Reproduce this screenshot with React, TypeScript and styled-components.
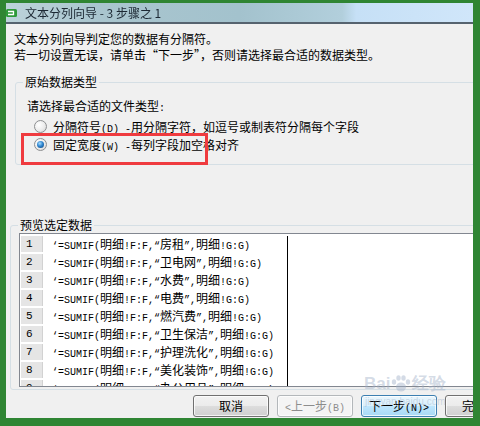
import React from "react";
import styled, { createGlobalStyle } from "styled-components";

const GlobalStyle = createGlobalStyle`
  * { box-sizing: border-box; }
  html, body { margin: 0; padding: 0; background: #2f8533; }
  body {
    font-family: "Noto Sans CJK SC", "Liberation Sans", sans-serif;
    font-size: 12px;
    color: #000;
  }
`;

const Frame = styled.div`
  width: 480px;
  height: 426px;
  padding: 3px 7px 8px 6px;
  background: #2f8533;
  overflow: hidden;
`;

const Window = styled.div`
  width: 467px;
  height: 415px;
  display: flex;
  flex-direction: column;
  background: #f0f0f0;
  overflow: hidden;
`;

const TitleBar = styled.div`
  flex: none;
  height: 21px;
  display: flex;
  align-items: center;
  gap: 8px;
  background: linear-gradient(
    90deg,
    #bcd3da 0%,
    #a9c5ce 20%,
    #a3c2cd 50%,
    #b2cfdc 72%,
    #c6e0f6 75%,
    #d0e6fa 100%
  );
  border-bottom: 2px solid #56636f;
`;

const TitleText = styled.span`
  color: #1c2833;
  font-size: 12px;
  filter: blur(0.6px);
  white-space: nowrap;
`;

const Body = styled.div`
  position: relative;
  flex: 1;
  display: flex;
  flex-direction: column;
  overflow: hidden;
`;

const Intro = styled.div`
  padding: 7px 0 0 8px;
  line-height: 16px;
  white-space: nowrap;
`;

const Group = styled.fieldset<{ $top: number; $left: number }>`
  flex: none;
  margin: ${(p) => p.$top}px 0 0 ${(p) => p.$left}px;
  padding: 0;
  width: 480px;
  min-width: 0;
  border: 1px solid #d5dfe5;
  border-radius: 3px;
`;

const Legend = styled.legend`
  margin-left: 7px;
  padding: 0 2px;
  line-height: 14px;
  font-size: 12px;
`;

const TypeOptions = styled.div`
  display: flex;
  flex-direction: column;
  padding-bottom: 11px;
`;

const Prompt = styled.div`
  height: 16px;
  margin: 9px 0 3px 11px;
  line-height: 16px;
`;

const RadioRow = styled.div`
  display: flex;
  align-items: center;
  gap: 6px;
  height: 18px;
  padding-left: 18px;
  white-space: nowrap;
`;

const Radio = styled.span<{ $checked?: boolean }>`
  flex: none;
  width: 13px;
  height: 13px;
  border-radius: 50%;
  border: 1px solid #8d8f91;
  background: radial-gradient(circle at 35% 35%, #ffffff 0%, #ececec 55%, #cdcdcd 100%);
  display: flex;
  align-items: center;
  justify-content: center;

  &::after {
    content: "";
    display: ${(p) => (p.$checked ? "block" : "none")};
    width: 7px;
    height: 7px;
    border-radius: 50%;
    background: radial-gradient(circle at 40% 35%, #a8ddff 0%, #2f86d0 45%, #0b3b72 100%);
  }
`;

const ListBox = styled.div`
  margin: 1px 0 2px 8px;
  width: 470px;
  height: 154px;
  padding-top: 2px;
  border: 1px solid #828790;
  background: #fff;
  overflow: hidden;
`;

const Row = styled.div`
  display: flex;
  height: 18px;
`;

const NumCell = styled.div`
  width: 22px;
  height: 16px;
  margin-left: 1px;
  padding-left: 5px;
  background: #e5e5e5;
  border-right: 1px solid #d2d2d2;
  font-family: "Liberation Mono", monospace;
  font-size: 11px;
  line-height: 16px;
`;

const TextCell = styled.div`
  width: 245px;
  height: 18px;
  padding-left: 9px;
  border-right: 1px solid #000;
  line-height: 16px;
  white-space: nowrap;
  overflow: hidden;
`;

const Latin = styled.span`
  font-family: "Liberation Mono", monospace;
  font-size: 10px;
  line-height: 1;
`;

const ButtonRow = styled.div`
  flex: none;
  display: flex;
  gap: 8px;
  margin-top: 5px;
  padding-left: 187px;
`;

type Variant = "normal" | "primary" | "disabled";

const Button = styled.button<{ $variant?: Variant }>`
  flex: none;
  width: 76px;
  height: 22px;
  padding: 0;
  border-radius: 3px;
  font-family: "Noto Sans CJK SC", sans-serif;
  font-size: 12px;
  line-height: 16px;
  white-space: nowrap;
  border: 1px solid
    ${(p) =>
      p.$variant === "primary" ? "#3c7fb1" : p.$variant === "disabled" ? "#b3b7ba" : "#707070"};
  color: ${(p) => (p.$variant === "disabled" ? "#8d8d8d" : "#000")};
  background: ${(p) =>
    p.$variant === "primary"
      ? "linear-gradient(#eaf6fd 0%, #d9f0fc 50%, #bee6fd 51%, #a7d9f5 100%)"
      : p.$variant === "disabled"
      ? "#f4f4f4"
      : "linear-gradient(#f2f2f2 0%, #ebebeb 50%, #dddddd 51%, #cfcfcf 100%)"};
  box-shadow: inset 0 0 0 1px rgba(255, 255, 255, 0.75);
`;

const RedMark = styled.div`
  position: absolute;
  left: 15px;
  top: 109px;
  width: 187px;
  height: 32px;
  border: 3px solid #ef3b3f;
  pointer-events: none;
`;

const Watermark = styled.div`
  position: absolute;
  left: 358px;
  top: 350px;
  display: flex;
  flex-direction: column;
  align-items: center;
  color: rgba(160, 176, 200, 0.45);
  pointer-events: none;
`;

const WatermarkLogo = styled.div`
  display: flex;
  align-items: center;
  font-family: "Liberation Sans", sans-serif;
  font-size: 17px;
  font-weight: bold;
  line-height: 20px;
`;

const WatermarkUrl = styled.div`
  font-family: "Liberation Sans", sans-serif;
  font-size: 10px;
  line-height: 12px;
  margin-top: 2px;
`;

function mixed(text: string) {
  return text
    .split(/([\x20-\x7e‘“”]+)/)
    .map((part, i) => (i % 2 === 1 ? <Latin key={i}>{part}</Latin> : part));
}

const rows = [
  "‘=SUMIF(明细!F:F,“房租”,明细!G:G)",
  "‘=SUMIF(明细!F:F,“卫电网”,明细!G:G)",
  "‘=SUMIF(明细!F:F,“水费”,明细!G:G)",
  "‘=SUMIF(明细!F:F,“电费”,明细!G:G)",
  "‘=SUMIF(明细!F:F,“燃汽费”,明细!G:G)",
  "‘=SUMIF(明细!F:F,“卫生保洁”,明细!G:G)",
  "‘=SUMIF(明细!F:F,“护理洗化”,明细!G:G)",
  "‘=SUMIF(明细!F:F,“美化装饰”,明细!G:G)",
  "‘=SUMIF(明细!F:F,“办公用品”,明细!G:G)",
];

const AppIcon = () => (
  <svg width="11" height="8" viewBox="0 0 11 8">
    <rect x="0" y="0" width="11" height="8" rx="1.5" fill="#2e9a3a" />
    <path d="M2 2.5 H7.5 V5.5 H2" stroke="#fff" strokeWidth="1.3" fill="none" />
  </svg>
);

const Paw = () => (
  <svg width="22" height="18" viewBox="0 0 22 18">
    <ellipse cx="11" cy="12" rx="5" ry="4.5" fill="currentColor" />
    <ellipse cx="4" cy="7" rx="2.2" ry="2.8" fill="currentColor" />
    <ellipse cx="8.5" cy="3" rx="2.2" ry="2.8" fill="currentColor" />
    <ellipse cx="13.5" cy="3" rx="2.2" ry="2.8" fill="currentColor" />
    <ellipse cx="18" cy="7" rx="2.2" ry="2.8" fill="currentColor" />
  </svg>
);

export default function App() {
  return (
    <>
      <GlobalStyle />
      <Frame>
        <Window>
          <TitleBar>
            <AppIcon />
            <TitleText>文本分列向导 - 3 步骤之 1</TitleText>
          </TitleBar>
          <Body>
            <Intro>
              <div>文本分列向导判定您的数据有分隔符。</div>
              <div>若一切设置无误，请单击“下一步”，否则请选择最合适的数据类型。</div>
            </Intro>

            <Group $top={12} $left={9}>
              <Legend>原始数据类型</Legend>
              <TypeOptions>
                <Prompt>{mixed("请选择最合适的文件类型:")}</Prompt>
                <RadioRow>
                  <Radio />
                  <span>{mixed("分隔符号(D) -用分隔字符，如逗号或制表符分隔每个字段")}</span>
                </RadioRow>
                <RadioRow>
                  <Radio $checked />
                  <span>{mixed("固定宽度(W) -每列字段加空格对齐")}</span>
                </RadioRow>
              </TypeOptions>
            </Group>

            <Group $top={53} $left={4}>
              <Legend>预览选定数据</Legend>
              <ListBox>
                {rows.map((text, i) => (
                  <Row key={i}>
                    <NumCell>{i + 1}</NumCell>
                    <TextCell>{mixed(text)}</TextCell>
                  </Row>
                ))}
              </ListBox>
            </Group>

            <ButtonRow>
              <Button>取消</Button>
              <Button $variant="disabled">{mixed("<上一步(B)")}</Button>
              <Button $variant="primary">{mixed("下一步(N)>")}</Button>
              <Button>{mixed("完成(F)")}</Button>
            </ButtonRow>

            <RedMark />
            <Watermark>
              <WatermarkLogo>
                Bai
                <Paw />
                经验
              </WatermarkLogo>
              <WatermarkUrl>jingyan.baidu.com</WatermarkUrl>
            </Watermark>
          </Body>
        </Window>
      </Frame>
    </>
  );
}
